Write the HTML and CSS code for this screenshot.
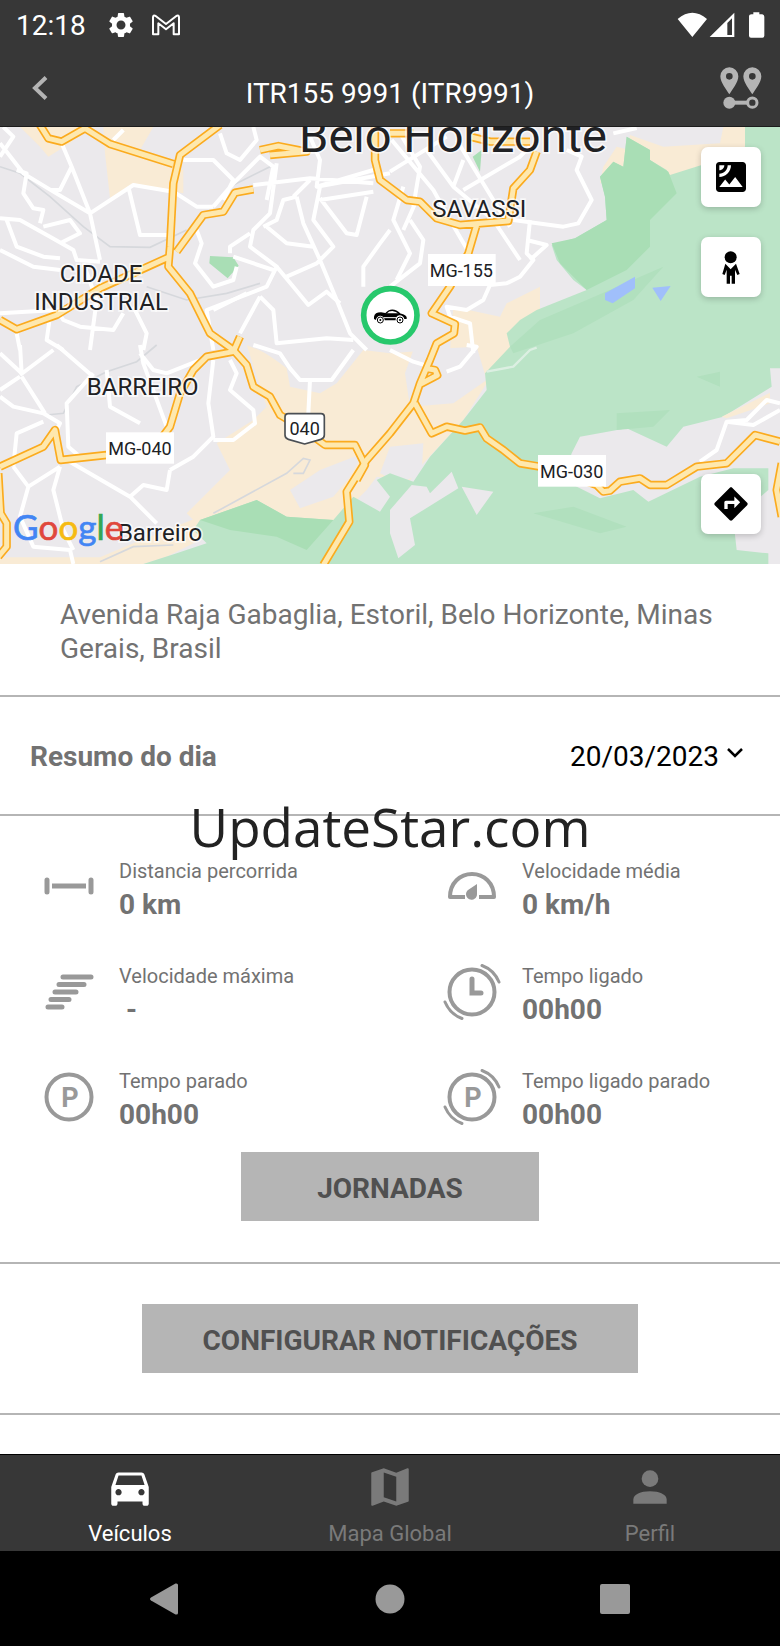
FILE: index.html
```html
<!DOCTYPE html>
<html lang="pt-BR">
<head>
  <meta charset="UTF-8" />
  <meta name="viewport" content="width=device-width, initial-scale=1" />
  <title>ITR155 9991 (ITR9991)</title>
  <link rel="stylesheet" href="styles.css">
</head>
<body>

  <div class="status-bar">
    <span class="clock">12:18</span>
    <svg class="status-gear" viewBox="0 0 24 24"><path fill="#fff" d="M19.14 12.94c.04-.3.06-.61.06-.94 0-.32-.02-.64-.07-.94l2.03-1.58c.18-.14.23-.41.12-.61l-1.92-3.32c-.12-.22-.37-.29-.59-.22l-2.39.96c-.5-.38-1.03-.7-1.62-.94l-.36-2.54c-.04-.24-.24-.41-.48-.41h-3.84c-.24 0-.43.17-.47.41l-.36 2.54c-.59.24-1.13.57-1.62.94l-2.39-.96c-.22-.08-.47 0-.59.22L2.74 8.87c-.12.21-.08.47.12.61l2.03 1.58c-.05.3-.09.63-.09.94s.02.64.07.94l-2.03 1.58c-.18.14-.23.41-.12.61l1.92 3.32c.12.22.37.29.59.22l2.39-.96c.5.38 1.03.7 1.62.94l.36 2.54c.05.24.24.41.48.41h3.84c.24 0 .44-.17.47-.41l.36-2.54c.59-.24 1.13-.56 1.62-.94l2.39.96c.22.08.47 0 .59-.22l1.92-3.32c.12-.22.07-.47-.12-.61l-2.01-1.58zM12 15.6c-1.98 0-3.6-1.62-3.6-3.6s1.62-3.6 3.6-3.6 3.6 1.62 3.6 3.6-1.62 3.6-3.6 3.6z"/></svg>
    <svg class="status-mail" viewBox="0 0 84 64"><path fill="none" stroke="#fff" stroke-width="6" stroke-linejoin="round" d="M3 60V9q0-8 8-4l31 24L73 5q8-4 8 4v51H65V27L42 45 19 27v33z"/></svg>
    <svg class="status-signal" viewBox="0 0 264 78">
      <path fill="#fff" d="M2 21Q46-17 90 21L46 75zM98 75L172 2v73zM254 7q8 0 8 7v57q0 6-6 6h-34q-6 0-6-6V14q0-7 8-7h5V1h18v6z"/>
      <path fill="#373737" d="M151 33l14-14v50h-14z"/>
    </svg>
  </div>

  <header class="app-bar">
    <button class="icon-btn back" aria-label="Voltar">
      <svg viewBox="0 0 16 24"><path fill="none" stroke="#b4b4b4" stroke-width="4" d="M14 1.500L3 12l11 10.500"/></svg>
    </button>
    <h1>ITR155 9991 (ITR9991)</h1>
    <button class="icon-btn route" aria-label="Rota">
      <svg viewBox="0 0 126 126">
        <path fill="#b4b4b4" fill-rule="evenodd" d="M28 1a27 27 0 0 1 27 27c0 18-18 40-27 54C19 68 1 46 1 28A27 27 0 0 1 28 1zm0 17a10 10 0 1 0 0 20 10 10 0 0 0 0-20zM97 1a27 27 0 0 1 27 27c0 18-18 40-27 54-9-14-27-36-27-54A27 27 0 0 1 97 1zm0 17a10 10 0 1 0 0 20 10 10 0 0 0 0-20z"/>
        <circle cx="28" cy="107" r="18" fill="#b4b4b4"/>
        <path stroke="#b4b4b4" stroke-width="12" d="M28 107h54"/>
        <circle cx="97" cy="107" r="14" fill="none" stroke="#b4b4b4" stroke-width="9"/>
      </svg>
    </button>
  </header>

  <main>
    <section class="map">
      <svg class="map-canvas" viewBox="0 21 2340 1311" preserveAspectRatio="xMidYMid slice">
        <rect width="2340" height="1340" fill="#ebe9ec"/>

        <!-- terrain -->
        <g fill="#f9ebd5">
          <path d="M60 21H260L210 70 145 110 120 80zM310 21H460L420 90 470 130 550 150V220L400 190 330 235 315 100z"/>
          <path d="M740 675L800 700 860 745 870 800 960 820 1010 790 1090 690 1170 700 1300 690 1350 690 1360 560 1500 590 1520 550 1620 500 1620 580 1530 630 1530 700 1460 790 1390 900 1270 1030 1230 1080 1130 1070 1100 1110 1000 1210 850 1200 760 1150 600 1220 560 1180 690 1050 650 970 760 900 800 860z"/>
          <path d="M400 1270L600 1190 640 1240 500 1310 430 1332H0V1312H300z"/>
          <path d="M1890 45L1990 80 2160 70 2170 21H2240V90L2110 145 2000 180 1880 120zM1850 80L1890 90 1870 150 1800 190 1810 140z"/>
        </g>
        <g fill="#ebe9ec">
          <path d="M870 1110L960 1050 1090 1000 1050 1070 1000 1130 900 1165zM1215 760L1240 690 1430 680 1460 780 1360 850 1230 860zM1170 980L1270 970 1265 1060 1200 1090 1140 1060zM780 690L1060 690 1000 790 900 790 860 740z"/>
        </g>
        <path fill="#bbe4c7" d="M2235 21H2340V745H2310L2315 800 2170 890 2050 920 2000 980 1880 925 1740 950 1715 1000 1690 1080 1800 1135 1900 1110 1945 1145 2100 1070 2200 1045H2305V1110L2200 1200 2210 1290 2305 1300V1332H430L530 1300 620 1270 580 1230 600 1200 770 1140 860 1190 1000 1200 1060 1130 1140 1175 1170 1130 1130 1080 1170 1060 1240 1085 1290 1010 1390 900 1460 810 1455 760 1530 680 1520 640 1560 600 1610 570 1760 510 1720 480 1670 420 1655 375 1725 355 1820 300 1815 230 1800 170 1840 125 1870 140 1880 50 1950 90V120L2000 150 2010 165 2105 135 2235 80z"/>
        <path fill="#a9deb5" d="M1655 370L1725 355 1820 300 1815 230 1800 170 1840 125 1870 140 1880 50 1950 90V120L2005 155 2030 220 1950 300V380L1880 450 1760 510 1680 430zM630 408L700 412 716 437 683 475 628 430zM1418 110L1445 90 1440 155zM600 1200L770 1140 860 1190 1000 1200 920 1290 830 1250 690 1230z"/>
        <path fill="#b1e0be" d="M1530 680L1620 600 1760 540 1990 440 1900 540 1720 640 1540 700zM1850 880L2010 870 1960 920 1850 930zM2090 770L2160 755 2160 800zM1600 1180L1720 1160 1880 1220 1800 1240z"/>
        <path fill="#f9ebd5" d="M2165 890L2310 818V850L2180 895z"/>
        <path fill="#ebe9ec" d="M1235 1095L1280 1100 1290 1120 1355 1055 1375 1105 1230 1195 1245 1275 1195 1315 1170 1240V1170zM1385 1100L1480 1115 1430 1185z"/>
        <path fill="#a0bffb" d="M1815 520L1905 470V505L1838 550 1815 540zM1957 503L2012 498 1982 543z"/>

        <!-- railways -->
        <g fill="none" stroke="#d6d8dc" stroke-width="5">
          <path d="M0 140L60 160 150 230 250 320 330 380 450 382 560 330M810 140L690 200M440 500L560 540 680 520 780 490M470 675L410 725 320 755 230 800 190 880 140 885M640 1180L860 1060 910 1015 930 1020 910 1060 880 1060M300 1325L400 1280 520 1275"/>
        </g>

        <!-- streets -->
        <g fill="none" stroke="#fff" stroke-width="12" stroke-linejoin="round">
          <path d="M10 21L40 50 0 110M0 70L70 160 160 215 270 280M185 70L215 140 270 280 300 420M215 140L180 210 150 210M50 150L80 160 70 220 100 265 130 270 120 310M270 280L400 195 520 215 590 260 640 260M385 200L420 345 520 345M0 295L60 300 150 350 220 390 230 420 300 425M20 300L50 380 130 410 180 415M130 320L210 300 240 340 180 370M0 390L100 440 180 450M0 580L170 570 190 600 240 620 340 630 370 580M250 430L290 540 270 690"/>
          <path d="M340 60L370 30M550 120H640L700 180 670 240M660 40L680 100 720 120 770 60 760 21M640 260L700 190 780 110 820 140 800 240M760 195L930 175 1120 190M930 50L960 120 950 200 1120 150M830 130L810 280 760 330 750 380 830 440 800 500 620 570 640 690M890 230L850 240 830 300 790 320M890 230L910 310 960 420 1010 540 1050 640 1100 690M930 180L880 230M960 200L940 300 1000 380 950 430 860 470M950 200L1170 160M960 240L1120 215M960 235L1040 340 1070 345 1100 230M800 320L860 370 940 380M690 400L690 380 750 340M700 410L820 450M590 330L605 370 585 430 640 500 700 480 710 440"/>
          <path d="M830 440L880 500 925 555 980 515 1020 550M780 530L820 570 830 670 980 655 1060 660M1170 330L1140 370 1090 440 1090 500M640 570L740 520M780 530L720 640M400 560L440 640 430 690M150 590L140 660 190 690M50 640L60 690M1170 500L1260 430 1270 360 1230 300"/>
          <path d="M1175 60L1300 210 1350 300 1420 420M1170 155L1340 50M1280 90L1360 200 1390 120M1200 40L1260 140 1240 260M1360 200L1480 300 1560 420M1390 210L1560 110 1590 80M1370 60L1480 240 1530 320M1210 200L1180 300 1230 400 1190 480M1210 330L1250 240M1590 420L1640 375 1580 360M1540 300L1690 320 1735 310 1775 240 1730 150 1745 110 1700 90M1590 300L1580 400 1600 420 1560 470 1520 490 1470 495 1450 540 1400 570 1340 560 1350 590 1410 610 1420 700M1840 40L1910 24"/>
          <path d="M60 675L65 760 0 700M60 765L160 690M65 770L135 880M0 830L40 860 130 880M170 675L280 770M60 770L0 810M280 760L200 850 205 980 240 1010M130 880L180 910 170 930M130 905L50 940 40 1040M320 750L330 860 420 910M420 675L430 730 500 920M420 700L460 750 500 760 600 720M640 720L625 850 640 950 580 1010 510 1050M640 960L700 960 765 910 760 870 690 810 710 760 690 720M510 1050L500 1110 430 1095 390 1130 200 1020M390 1130L470 1210M40 1040L85 1100 60 1190 100 1280 210 1290 220 1332M180 1040L160 1110 190 1230 220 1290M180 1040L85 1100"/>
          <path d="M760 675L840 700 870 745 900 780 995 780 1060 690M930 780L925 880M1170 690L1240 725 1290 740M1340 755L1380 740 1430 680 1400 675M2100 1025L2150 990 2180 905 2240 900 2300 840 2340 850M2180 905L2260 915 2340 870"/>
          <path stroke="#dcefe2" stroke-width="7" d="M1460 755L1540 740 1590 690 1610 683"/>
        </g>

        <!-- highways, casing first and then the fill -->
        <g fill="none" stroke-linejoin="round">
          <g stroke="#fbab1e" stroke-width="25">
            <path d="M120 15L145 55 185 65 255 25 330 72 520 132M660 15L540 105 520 190 510 380 505 440 570 520 630 640 700 690 740 735 760 800 810 830 840 885 900 920 975 975H1065L1095 1035 1070 1080M0 600L50 628 170 585 300 505 505 412M530 395L610 285 670 275 705 218 760 208M780 90L835 78 920 95 810 105"/>
            <path d="M1125 15V120L1140 180 1220 240 1260 245 1310 295 1380 315 1525 303 1540 205 1590 150 1610 95M1430 315L1405 400 1350 500 1295 580 1365 612 1362 640 1310 670 1290 720 1260 790 1240 850 1170 940 1100 1020 1040 1115 1048 1205 970 1335M1275 745L1305 750 1312 766 1262 792M1245 850L1295 940 1340 920 1395 932 1440 922 1460 955 1510 990 1560 1030 1650 1045 1790 1095 1810 1115 1830 1112 1860 1085 1920 1075 1950 1095H2000L2090 1040 2180 1030 2230 980 2265 945 2340 965M1170 40H1240M1410 50L1470 65 1590 65"/>
            <path d="M0 1040L130 980 165 930 182 1020 320 1005 480 960 510 920 540 820 580 750 620 710 700 695 720 650M-5 1060L2 1180 20 1210V1280L-5 1310M2345 1030L2330 1110 2345 1190"/>
          </g>
          <g stroke="#fee8ae" stroke-width="15">
            <path d="M120 15L145 55 185 65 255 25 330 72 520 132M660 15L540 105 520 190 510 380 505 440 570 520 630 640 700 690 740 735 760 800 810 830 840 885 900 920 975 975H1065L1095 1035 1070 1080M0 600L50 628 170 585 300 505 505 412M530 395L610 285 670 275 705 218 760 208M780 90L835 78 920 95 810 105"/>
            <path d="M1125 15V120L1140 180 1220 240 1260 245 1310 295 1380 315 1525 303 1540 205 1590 150 1610 95M1430 315L1405 400 1350 500 1295 580 1365 612 1362 640 1310 670 1290 720 1260 790 1240 850 1170 940 1100 1020 1040 1115 1048 1205 970 1335M1275 745L1305 750 1312 766 1262 792M1245 850L1295 940 1340 920 1395 932 1440 922 1460 955 1510 990 1560 1030 1650 1045 1790 1095 1810 1115 1830 1112 1860 1085 1920 1075 1950 1095H2000L2090 1040 2180 1030 2230 980 2265 945 2340 965M1170 40H1240M1410 50L1470 65 1590 65"/>
            <path d="M0 1040L130 980 165 930 182 1020 320 1005 480 960 510 920 540 820 580 750 620 710 700 695 720 650M-5 1060L2 1180 20 1210V1280L-5 1310M2345 1030L2330 1110 2345 1190"/>
          </g>
        </g>

        <!-- place names -->
        <g class="place">
          <text class="city" x="1359" y="95">Belo Horizonte</text>
          <text x="1438" y="291">SAVASSI</text>
          <text x="303" y="487">CIDADE</text>
          <text x="303" y="571">INDUSTRIAL</text>
          <text x="428" y="825">BARREIRO</text>
          <text x="480" y="1262">Barreiro</text>
        </g>

        <g fill="#fff">
          <rect x="1284" y="402" width="203" height="96"/>
          <rect x="318" y="937" width="204" height="94"/>
          <rect x="1614" y="1005" width="204" height="95"/>
          <path stroke="#4b4f54" stroke-width="5" stroke-linejoin="round" d="M865 881H963Q973 881 973 891V945Q973 955 963 958L914 972 865 958Q855 955 855 945V891Q855 881 865 881z"/>
        </g>
        <g class="road-name">
          <text x="1384" y="472">MG-155</text>
          <text x="420" y="1005">MG-040</text>
          <text x="1715" y="1074">MG-030</text>
          <text x="914" y="945">040</text>
        </g>

        <text class="google" x="39" y="1260"><tspan fill="#4285f4" stroke="#4285f4">G</tspan><tspan fill="#e0483c" stroke="#e0483c">o</tspan><tspan fill="#f6bb13" stroke="#f6bb13">o</tspan><tspan fill="#4285f4" stroke="#4285f4">g</tspan><tspan fill="#34a853" stroke="#34a853">l</tspan><tspan fill="#e0483c" stroke="#e0483c">e</tspan></text>

        <!-- vehicle -->
        <circle cx="1171" cy="586" r="80" fill="#fff" stroke="#27c86c" stroke-width="17"/>
        <g>
          <path d="M1122 590Q1124 577 1143 577L1160 580H1196Q1214 582 1220 591V597H1213A13 13 0 0 0 1187 601H1154A13 13 0 0 0 1128 600L1122 597z"/>
          <path fill="none" stroke="#000" stroke-width="4" d="M1158 580L1166 573Q1184 566 1200 582"/>
          <circle cx="1141" cy="600" r="9" fill="#fff" stroke="#000" stroke-width="3"/>
          <circle cx="1200" cy="600" r="9" fill="#fff" stroke="#000" stroke-width="3"/>
          <circle cx="1141" cy="600" r="3"/>
          <circle cx="1200" cy="600" r="3"/>
          <path stroke="#fff" stroke-width="3" d="M1152 593h38"/>
        </g>
      </svg>

      <div class="map-tools">
        <button class="map-btn" aria-label="Satélite">
          <svg viewBox="0 0 24 24"><path d="M19 3H5c-1.100 0-2 .9-2 2v14c0 1.100.9 2 2 2h14c1.100 0 2-.9 2-2V5c0-1.100-.9-2-2-2zM5 4.990h3C8 6.650 6.660 8 5 8V4.990zM5 12v-2c2.760 0 5-2.250 5-5.010h2C12 8.860 8.870 12 5 12zm0 6l3.500-4.500 2.500 3.010L14.500 12l4.500 6H5z"/></svg>
        </button>
        <button class="map-btn" aria-label="Street View">
          <svg viewBox="962 380 120 120"><circle cx="1021" cy="411" r="18"/><path d="M1005 430L1021 447 1037 430 1048 461 1041 464 1034 448V490H1024V466H1019V490H1009V448L1003 464 996 461z"/></svg>
        </button>
        <button class="map-btn last" aria-label="Como chegar">
          <svg viewBox="0 0 24 24"><path d="M21.710 11.290l-9-9c-.39-.39-1.020-.39-1.410 0l-9 9c-.39.39-.39 1.020 0 1.410l9 9c.39.39 1.020.39 1.410 0l9-9c.39-.38.39-1.010 0-1.410zM14 14.500V12h-4v3H8v-4c0-.55.45-1 1-1h5V7.500l3.500 3.500-3.500 3.500z"/></svg>
        </button>
      </div>
    </section>

    <p class="address">Avenida Raja Gabaglia, Estoril, Belo Horizonte, Minas Gerais, Brasil</p>

    <div class="day">
      <h2>Resumo do dia</h2>
      <button class="date">20/03/2023
        <svg viewBox="0 0 16 10"><path fill="none" stroke="#000" stroke-width="2.500" d="M1 1l7 7 7-7"/></svg>
      </button>
      <div class="watermark">UpdateStar.com</div>
    </div>

    <section class="summary">
      <div class="stats">
        <div class="stat">
          <svg viewBox="0 0 64 64"><path fill="none" stroke="#999" stroke-width="5" stroke-linecap="round" d="M10 25v12M54 25v12"/><path stroke="#999" stroke-width="5" d="M15 31h34"/></svg>
          <div><span class="label">Distancia percorrida</span><strong>0 km</strong></div>
        </div>
        <div class="stat">
          <svg viewBox="0 0 64 64"><path fill="none" stroke="#999" stroke-width="4" stroke-linejoin="round" d="M25 42H10C10 28 20 19 32 19S54 28 54 42H39"/><path fill="#999" d="M37 29v10a5.500 5.500 0 1 1-9-4z"/></svg>
          <div><span class="label">Velocidade média</span><strong>0 km/h</strong></div>
        </div>
        <div class="stat">
          <svg viewBox="0 0 64 64"><path stroke="#999" stroke-width="5" stroke-linecap="round" d="M26 17h28M22 24.500h25M18 32h21M14 39.500h18M11 47h14"/></svg>
          <div><span class="label">Velocidade máxima</span><strong class="empty">-</strong></div>
        </div>
        <div class="stat">
          <svg viewBox="0 0 64 64"><g fill="none" stroke="#999" stroke-width="4" stroke-linecap="round"><circle cx="32" cy="32" r="22.500"/><path stroke-width="3" d="M42 5.500Q54 10 59 22M5 42Q10 54 22 58.500"/><path d="M32 19v14h9" stroke-width="5"/></g></svg>
          <div><span class="label">Tempo ligado</span><strong>00h00</strong></div>
        </div>
        <div class="stat">
          <svg viewBox="0 0 64 64"><circle cx="32" cy="32" r="22.500" fill="none" stroke="#999" stroke-width="4"/><text x="33" y="42">P</text></svg>
          <div><span class="label">Tempo parado</span><strong>00h00</strong></div>
        </div>
        <div class="stat">
          <svg viewBox="0 0 64 64"><g fill="none" stroke="#999" stroke-width="4" stroke-linecap="round"><circle cx="32" cy="32" r="22.500"/><path stroke-width="3" d="M42 5.500Q54 10 59 22M5 42Q10 54 22 58.500"/></g><text x="33" y="42">P</text></svg>
          <div><span class="label">Tempo ligado parado</span><strong>00h00</strong></div>
        </div>
      </div>
      <button class="btn">JORNADAS</button>
    </section>

    <section class="notify">
      <button class="btn wide">CONFIGURAR NOTIFICAÇÕES</button>
    </section>
  </main>

  <nav class="tabs">
    <a class="tab active" href="#veiculos">
      <svg viewBox="0 0 24 24"><path d="M18.920 6.010C18.720 5.420 18.160 5 17.500 5h-11c-.66 0-1.210.42-1.420 1.010L3 12v8c0 .55.45 1 1 1h1c.55 0 1-.45 1-1v-1h12v1c0 .55.45 1 1 1h1c.55 0 1-.45 1-1v-8l-2.080-5.990zM6.500 16c-.83 0-1.500-.67-1.500-1.500S5.670 13 6.500 13s1.500.67 1.500 1.500S7.330 16 6.500 16zm11 0c-.83 0-1.500-.67-1.500-1.500s.67-1.500 1.500-1.500 1.500.67 1.500 1.500-.67 1.500-1.500 1.500zM5 11l1.500-4.500h11L19 11H5z"/></svg>
      Veículos
    </a>
    <a class="tab" href="#mapa">
      <svg viewBox="0 0 24 24"><path d="M20.500 3l-.16.03L15 5.100 9 3 3.360 4.900c-.21.07-.36.25-.36.48V20.500c0 .28.22.5.5.5l.16-.03L9 18.900l6 2.100 5.640-1.900c.21-.07.36-.25.36-.48V3.500c0-.28-.22-.5-.5-.5zM15 19l-6-2.110V5l6 2.110V19z"/></svg>
      Mapa Global
    </a>
    <a class="tab" href="#perfil">
      <svg viewBox="0 0 24 24"><circle cx="12" cy="8" r="4"/><path d="M4 20v-2c0-2.500 3.500-4 8-4s8 1.500 8 4v2z"/></svg>
      Perfil
    </a>
  </nav>

  <div class="system-nav">
    <button aria-label="Voltar"><svg viewBox="0 0 30 32"><path d="M1 14.500L25.500.5Q28 0 28 2v28q0 2-2.500 1.500L1 17.500q-2-1.500 0-3z"/></svg></button>
    <button aria-label="Início"><svg viewBox="0 0 30 32"><circle cx="15" cy="16" r="14.500"/></svg></button>
    <button aria-label="Recentes"><svg viewBox="0 0 30 32"><rect y="1" width="30" height="30" rx="2"/></svg></button>
  </div>

</body>
</html>
```

FILE: styles.css
```css
* {
  box-sizing: border-box;
}

body {
  margin: 0;
  font-family: Roboto, "Liberation Sans", sans-serif;
  font-size: 28px;
  color: #727272;
  background: #fff;
}

button {
  font: inherit;
  border: none;
  padding: 0;
  background: none;
  cursor: pointer;
}

svg {
  display: block;
}

h1, h2 {
  margin: 0;
  font-size: 28px;
}

/* top */
.status-bar {
  display: flex;
  align-items: center;
  height: 50px;
  padding: 0 15px 0 16px;
  background: #373737;
  color: #fff;
}

.status-gear {
  width: 30px;
  height: 30px;
  margin-left: 20px;
}

.status-mail {
  width: 28px;
  height: 22px;
  margin-left: 16px;
}

.status-signal {
  width: 88px;
  height: 26px;
  margin-left: auto;
}

.app-bar {
  display: grid;
  grid-template-columns: 1fr auto 1fr;
  align-items: center;
  height: 77px;
  padding: 0 18px;
  background: #373737;
  border-bottom: 1px solid #1c1c1c;
}

.app-bar h1 {
  padding-top: 11px;
  font-weight: 400;
  color: #fff;
}

.back {
  justify-self: start;
  padding-left: 14px;
}

.back svg {
  width: 16px;
  height: 24px;
}

.route {
  justify-self: end;
}

.route svg {
  width: 42px;
  height: 42px;
}

/* map */
.map {
  position: relative;
  height: 437px;
  overflow: hidden;
}

.map-canvas {
  width: 100%;
  height: 100%;
}

.place text {
  font-size: 72px;
  text-anchor: middle;
  fill: #202124;
  stroke: #fff;
  stroke-width: 10px;
  stroke-opacity: 0.7;
  paint-order: stroke;
}

.place .city {
  font-size: 141px;
}

.road-name text {
  font-size: 54px;
  text-anchor: middle;
  fill: #202124;
}

.google {
  font-family: Lato, sans-serif;
  font-size: 105px;
  stroke-width: 2px;
}

.map-tools {
  position: absolute;
  top: 20px;
  right: 19px;
  bottom: 30px;
  display: flex;
  flex-direction: column;
  gap: 30px;
}

.map-btn {
  display: grid;
  place-items: center;
  width: 60px;
  height: 60px;
  border-radius: 7px;
  background: #fff;
  box-shadow: 0 2px 6px rgba(0, 0, 0, 0.2);
}

.map-btn svg {
  width: 40px;
  height: 40px;
}

.map-btn.last {
  margin-top: auto;
}

/* content */
.address {
  margin: 0;
  padding: 34px 60px 29px;
  line-height: 34px;
  border-bottom: 2px solid #b5b5b5;
}

.day {
  position: relative;
  display: flex;
  align-items: center;
  justify-content: space-between;
  height: 119px;
  padding: 2px 37px 0 30px;
  border-bottom: 2px solid #b5b5b5;
}

.date {
  display: flex;
  gap: 8px;
  color: #000;
}

.date svg {
  width: 16px;
  height: 10px;
  margin-top: 8px;
}

.watermark {
  position: absolute;
  top: 92px;
  left: 0;
  width: 100%;
  font-family: "Open Sans", "Noto Sans", sans-serif;
  font-size: 53px;
  line-height: 76px;
  text-align: center;
  color: #222;
  pointer-events: none;
}

.summary {
  padding: 39px 37px 41px;
  border-bottom: 2px solid #b5b5b5;
}

.stats {
  display: grid;
  grid-template-columns: 1fr 1fr;
  gap: 37px 100px;
}

.stat {
  display: flex;
  gap: 18px;
  white-space: nowrap;
}

.stat svg {
  flex: none;
  width: 64px;
  height: 64px;
}

.stat text {
  font-size: 27px;
  font-weight: 700;
  text-anchor: middle;
  fill: #999;
}

.label {
  display: block;
  font-size: 20px;
  line-height: 32px;
}

.stat strong {
  display: block;
  line-height: 36px;
}

.stat .empty {
  padding-left: 7px;
}

.btn {
  display: block;
  width: 298px;
  height: 69px;
  margin: 19px auto 0;
  padding-top: 4px;
  background: #b5b5b5;
  color: #505050;
  font-weight: 700;
}

.btn.wide {
  width: 496px;
  margin-top: 0;
}

.notify {
  padding: 40px 0;
  margin-bottom: 39px;
  border-bottom: 2px solid #b5b5b5;
}

/* bottom */
.tabs {
  display: grid;
  grid-template-columns: repeat(3, 1fr);
  height: 97px;
  padding-top: 7px;
  background: #373737;
  border-top: 1px solid #000;
}

.tab {
  display: flex;
  flex-direction: column;
  align-items: center;
  font-size: 22px;
  line-height: 44px;
  color: #7a7a7a;
  text-decoration: none;
}

.tab svg {
  width: 50px;
  height: 50px;
  fill: currentColor;
}

.tab.active {
  color: #fff;
}

.system-nav {
  display: flex;
  justify-content: center;
  align-items: center;
  gap: 195px;
  height: 95px;
  background: #000;
}

.system-nav svg {
  width: 30px;
  height: 32px;
  fill: #999;
}
```
